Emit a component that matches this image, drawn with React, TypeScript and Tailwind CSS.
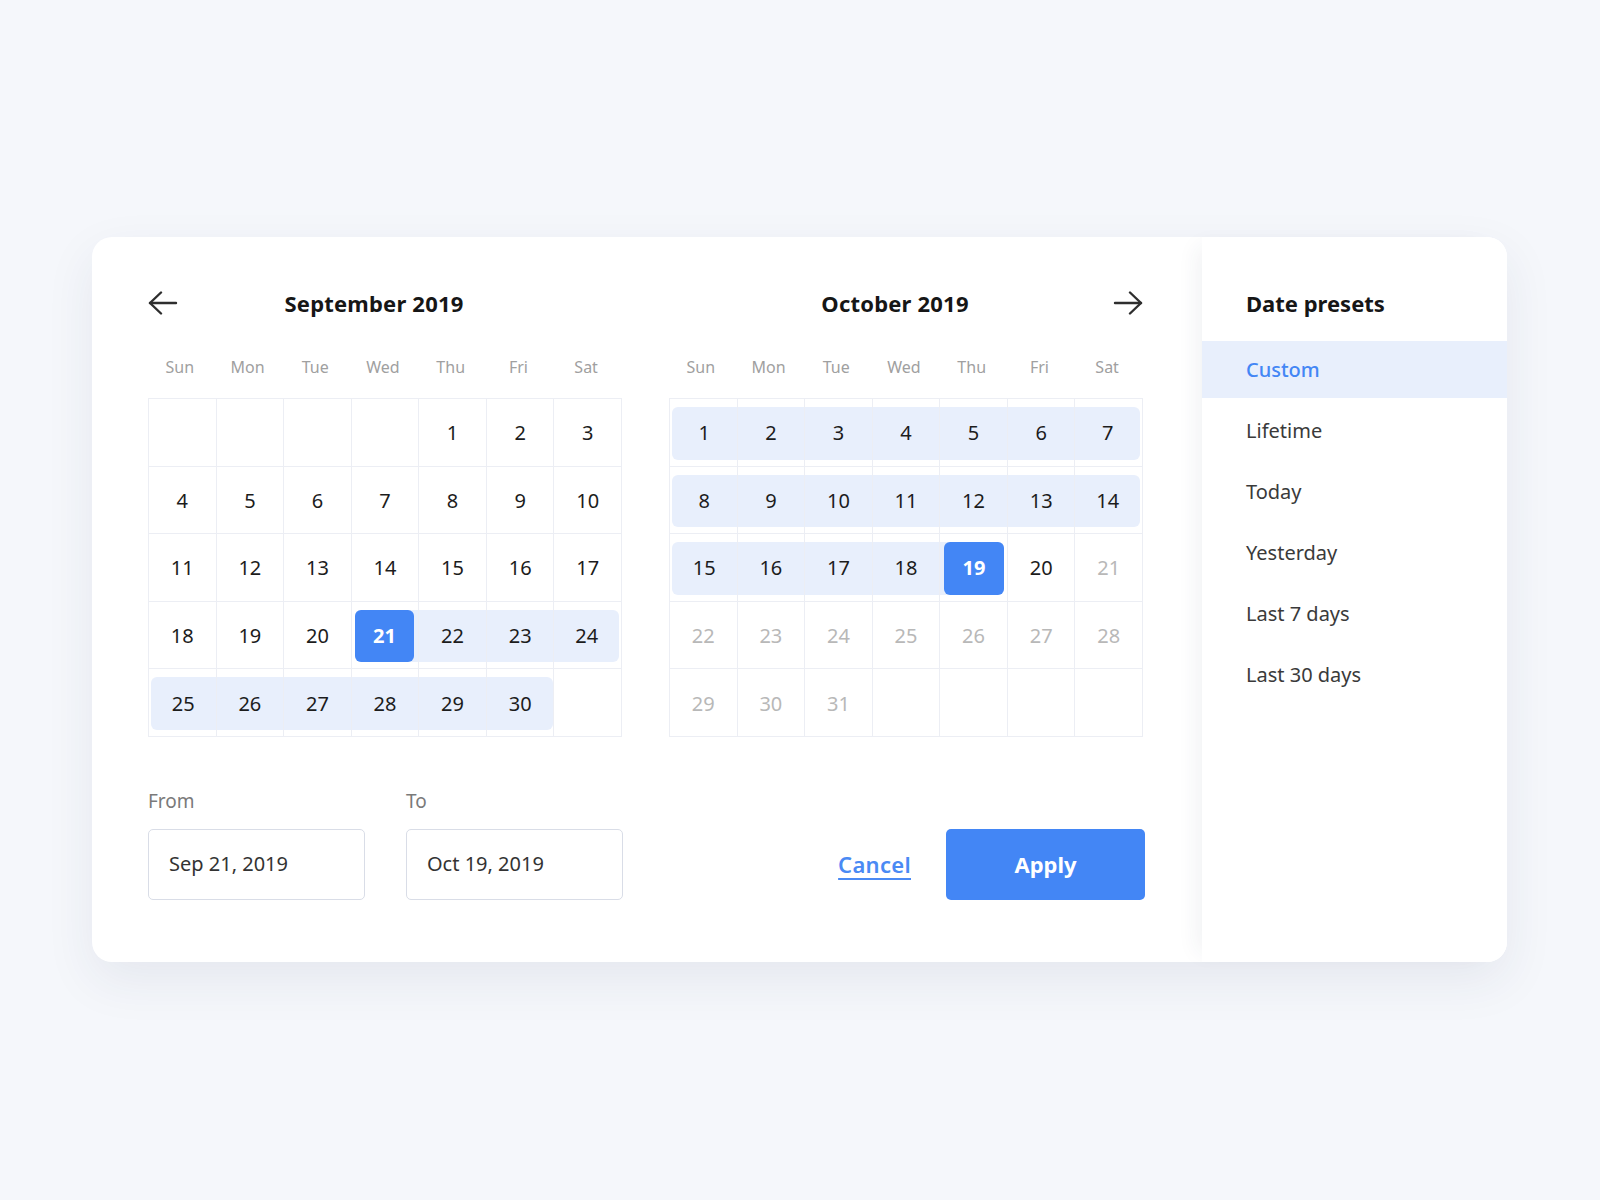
import React from "react";

type Day = number | null;

const weekdays = ["Sun", "Mon", "Tue", "Wed", "Thu", "Fri", "Sat"];

const sepWeeks: Day[][] = [
  [null, null, null, null, 1, 2, 3],
  [4, 5, 6, 7, 8, 9, 10],
  [11, 12, 13, 14, 15, 16, 17],
  [18, 19, 20, 21, 22, 23, 24],
  [25, 26, 27, 28, 29, 30, null],
];

const octWeeks: Day[][] = [
  [1, 2, 3, 4, 5, 6, 7],
  [8, 9, 10, 11, 12, 13, 14],
  [15, 16, 17, 18, 19, 20, 21],
  [22, 23, 24, 25, 26, 27, 28],
  [29, 30, 31, null, null, null, null],
];

const presets = ["Custom", "Lifetime", "Today", "Yesterday", "Last 7 days", "Last 30 days"];

function ArrowIcon({ dir }: { dir: "left" | "right" }) {
  return (
    <svg
      width="30"
      height="24"
      viewBox="0 0 30 24"
      fill="none"
      stroke="#2e2e2e"
      strokeWidth="2.4"
      strokeLinecap="round"
      strokeLinejoin="round"
      className={dir === "right" ? "rotate-180" : ""}
    >
      <path d="M2 12h26" />
      <path d="M13 1.5 2 12l11 10.5" />
    </svg>
  );
}

type MonthProps = {
  title: string;
  weeks: Day[][];
  last: number;
  arrow: "left" | "right";
  inRange: (d: number) => boolean;
  isStart: (d: number) => boolean;
  isEnd: (d: number) => boolean;
  muted: (d: number) => boolean;
};

function Month({ title, weeks, last, arrow, inRange, isStart, isEnd, muted }: MonthProps) {
  return (
    <div className="w-[474px]">
      <div className="relative flex h-[32px] items-center justify-center">
        {arrow === "left" && (
          <button className="absolute left-0 top-1/2 -translate-y-1/2">
            <ArrowIcon dir="left" />
          </button>
        )}
        <h2 className="pr-[22px] text-[22px] font-bold tracking-[0.2px] text-[#161616]">{title}</h2>
        {arrow === "right" && (
          <button className="absolute right-0 top-1/2 -translate-y-1/2">
            <ArrowIcon dir="right" />
          </button>
        )}
      </div>

      <div className="mt-[32px] grid h-[32px] grid-cols-7 items-center">
        {weekdays.map((w) => (
          <span key={w} className="pr-[4px] text-center text-[16px] text-[#a0a0a0]">
            {w}
          </span>
        ))}
      </div>

      <div className="mt-[15px] grid grid-cols-7 border-l border-t border-[#eceef4]">
        {weeks.flatMap((week, wi) =>
          week.map((d, di) => {
            if (d === null) {
              return <div key={`${wi}-${di}`} className="h-[67.6px] border-b border-r border-[#eceef4]" />;
            }
            const range = inRange(d);
            const start = isStart(d);
            const end = isEnd(d);
            const selected = start || end;
            const roundL = start || di === 0 || d === 1;
            const roundR = end || di === 6 || d === last;

            let band = "h-full";
            if (range) {
              band += " bg-[#e8effc]";
              if (roundL) band += " rounded-l-[6px]";
              if (roundR) band += " rounded-r-[6px]";
              if (start) band += " ml-[3px]";
              else if (di === 0) band += " ml-[2px]";
              if (end) band += " mr-[3px]";
              else if (di === 6) band += " mr-[2px]";
            }

            let inner = "flex h-full items-center justify-center text-[20px]";
            if (selected) {
              inner += " rounded-[6px] bg-[#4386f5] font-bold text-white";
              if (start) inner += " mr-[4px]";
              if (end) inner += " ml-[4px]";
            } else if (muted(d)) {
              inner += " text-[#b8b8b8]";
            } else {
              inner += " text-[#1c1c1c]";
            }

            return (
              <div key={`${wi}-${di}`} className="h-[67.6px] border-b border-r border-[#eceef4] pb-[6px] pt-[8px]">
                <div className={band}>
                  <div className={inner}>{d}</div>
                </div>
              </div>
            );
          })
        )}
      </div>
    </div>
  );
}

function DateField({ label, value }: { label: string; value: string }) {
  return (
    <div className="w-[217px]">
      <div className="h-[24px] text-[19px] leading-[24px] text-[#7a7a7a]">{label}</div>
      <div className="mt-[16px] flex h-[71px] items-center rounded-[5px] border border-[#d9dde7] px-[20px] text-[20px] text-[#333]">
        {value}
      </div>
    </div>
  );
}

export default function App() {
  return (
    <div
      className="min-h-screen bg-[#f5f7fb] pl-[92px] pt-[237px]"
      style={{ fontFamily: '"Noto Sans", "Open Sans", sans-serif' }}
    >
      <div className="flex h-[725px] w-[1415px] rounded-[20px] bg-white shadow-[0_18px_50px_rgba(40,50,90,0.08)]">
        <div className="flex flex-1 flex-col pl-[56px] pr-[57px] pt-[50px]">
          <div className="flex gap-[47px]">
            <Month
              title="September 2019"
              weeks={sepWeeks}
              last={30}
              arrow="left"
              inRange={(d) => d >= 21}
              isStart={(d) => d === 21}
              isEnd={() => false}
              muted={() => false}
            />
            <Month
              title="October 2019"
              weeks={octWeeks}
              last={31}
              arrow="right"
              inRange={(d) => d <= 19}
              isStart={() => false}
              isEnd={(d) => d === 19}
              muted={(d) => d > 20}
            />
          </div>

          <div className="mt-[52px] flex items-end">
            <DateField label="From" value="Sep 21, 2019" />
            <div className="ml-[41px]">
              <DateField label="To" value="Oct 19, 2019" />
            </div>
            <div className="ml-auto flex items-center gap-[35px]">
              <button className="text-[22px] font-semibold tracking-[0.3px] text-[#4a8af4] underline underline-offset-[5px]">
                Cancel
              </button>
              <button className="h-[71px] w-[199px] rounded-[5px] bg-[#4386f5] text-[22px] font-bold text-white">
                Apply
              </button>
            </div>
          </div>
        </div>

        <div className="w-[305px] rounded-r-[20px] bg-white pt-[50px] shadow-[-14px_0_22px_-10px_rgba(40,50,90,0.07)]">
          <h3 className="flex h-[32px] items-center pl-[44px] text-[22px] font-bold text-[#161616]">Date presets</h3>
          <ul className="mt-[22px] flex flex-col gap-[4px]">
            {presets.map((p, i) => (
              <li
                key={p}
                className={`flex h-[57px] items-center pl-[44px] text-[20px] ${
                  i === 0 ? "bg-[#e8effc] font-medium text-[#4386f5]" : "text-[#3a3a3a]"
                }`}
              >
                {p}
              </li>
            ))}
          </ul>
        </div>
      </div>
    </div>
  );
}
